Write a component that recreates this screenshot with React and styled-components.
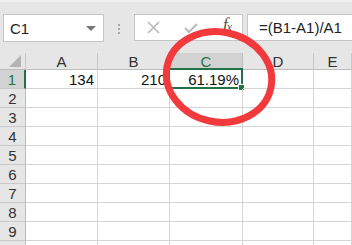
import React from "react";
import styled, { createGlobalStyle } from "styled-components";

const Global = createGlobalStyle`
  html, body { margin: 0; padding: 0; background: #fff; }
  body { width: 352px; height: 245px; overflow: hidden; font-family: "Liberation Sans", Arial, sans-serif; }
`;

const Page = styled.div`
  position: relative;
  width: 352px;
  height: 245px;
  overflow: hidden;
  background: #fff;
`;

const Toolbar = styled.div`
  height: 53px;
  box-sizing: border-box;
  padding-top: 14px;
  padding-left: 3px;
  background: #e6e6e6;
  border-top: 2px solid #f0f0f0;
  display: flex;
  align-items: flex-start;
`;

const Box = styled.div`
  box-sizing: border-box;
  height: ${(p) => p.$h || 28}px;
  background: #fff;
  border: 1px solid #c6c6c6;
  display: flex;
  align-items: center;
`;

const NameBox = styled(Box)`
  width: 101px;
  padding: 0 6px 0 6px;
  justify-content: space-between;
  font-size: 15px;
  color: #222;
  margin-top: -2px;
`;

const Caret = styled.span`
  width: 0;
  height: 0;
  border-left: 5px solid transparent;
  border-right: 5px solid transparent;
  border-top: 5px solid #777;
  margin-right: 1px;
`;

const Dots = styled.div`
  width: 30px;
  height: 26px;
  display: flex;
  flex-direction: column;
  align-items: center;
  justify-content: center;
  gap: 2px;
  & > span {
    width: 2px;
    height: 2px;
    background: #a8a8a8;
  }
`;

const ButtonBox = styled(Box)`
  width: 109px;
  margin-top: -2px;
  padding: 0 11px 0 12px;
  justify-content: space-between;
`;

const Fx = styled.span`
  font-family: "Liberation Serif", serif;
  font-style: italic;
  font-size: 18px;
  line-height: 1;
  color: #555;
  letter-spacing: -1px;
  margin-top: -5px;
  & > small { font-size: 12px; }
`;

const FormulaBox = styled(Box)`
  flex: 1;
  margin-left: 4px;
  margin-top: -2px;
  padding-left: 11px;
  border-right: none;
  font-size: 15px;
  color: #222;
`;

const Grid = styled.div`
  display: grid;
  grid-template-columns: 26px 72px 72px 73px 71px 1fr;
  grid-template-rows: 17px;
  grid-auto-rows: 19px;
`;

const Cell = styled.div`
  position: relative;
  box-sizing: border-box;
  border-right: 1px solid #d4d4d4;
  border-bottom: 1px solid #d4d4d4;
  font-size: 15px;
  color: #111;
  display: flex;
  align-items: center;
  justify-content: flex-end;
  padding-right: 3px;
  padding-top: 1px;
`;

const ColHead = styled.div`
  box-sizing: border-box;
  background: ${(p) => (p.$sel ? "#d2d2d2" : "#e6e6e6")};
  color: ${(p) => (p.$sel ? "#217346" : "#333")};
  border-right: 1px solid ${(p) => (p.$sel ? "#bdbdbd" : "#c9c9c9")};
  border-bottom: 1px solid #bdbdbd;
  font-size: 15px;
  display: flex;
  align-items: center;
  justify-content: center;
  padding-top: 1px;
`;

const Corner = styled(ColHead)`
  position: relative;
  &::after {
    content: "";
    position: absolute;
    right: 4px;
    bottom: 2px;
    width: 0;
    height: 0;
    border-left: 12px solid transparent;
    border-bottom: 12px solid #b4b4b4;
  }
`;

const RowHead = styled.div`
  box-sizing: border-box;
  background: ${(p) => (p.$sel ? "#d2d2d2" : "#e6e6e6")};
  color: ${(p) => (p.$sel ? "#217346" : "#333")};
  border-right: ${(p) => (p.$sel ? "2px solid #217346" : "1px solid #bdbdbd")};
  border-bottom: 1px solid #c9c9c9;
  font-size: 15px;
  display: flex;
  align-items: center;
  justify-content: center;
  padding-top: 1px;
`;

const Selection = styled.div`
  position: absolute;
  left: -2px;
  top: -2px;
  right: -1px;
  bottom: -1px;
  border: 2px solid #217346;
  pointer-events: none;
  &::after {
    content: "";
    position: absolute;
    right: -4px;
    bottom: -4px;
    width: 5px;
    height: 5px;
    background: #217346;
    border: 1px solid #fff;
  }
`;

const Annotation = styled.svg`
  position: absolute;
  left: 0;
  top: 0;
  pointer-events: none;
`;

const cols = ["A", "B", "C", "D", "E"];
const rows = [1, 2, 3, 4, 5, 6, 7, 8, 9, 10];
const data = { "1A": "134", "1B": "210", "1C": "61.19%" };

export default function App() {
  return (
    <Page>
      <Global />
      <Toolbar>
        <NameBox>
          <span>C1</span>
          <Caret />
        </NameBox>
        <Dots>
          <span />
          <span />
          <span />
        </Dots>
        <ButtonBox $h={27}>
          <svg width="13" height="13" viewBox="0 0 13 13">
            <path d="M1 1 L12 12 M12 1 L1 12" stroke="#b9b9b9" strokeWidth="1.6" fill="none" />
          </svg>
          <svg width="14" height="12" viewBox="0 0 14 12">
            <path d="M1 6 L5 10 L13 2" stroke="#b9b9b9" strokeWidth="2" fill="none" />
          </svg>
          <Fx>
            f<small>x</small>
          </Fx>
        </ButtonBox>
        <FormulaBox $h={27}>=(B1-A1)/A1</FormulaBox>
      </Toolbar>
      <Grid>
        <Corner />
        {cols.map((c) => (
          <ColHead key={c} $sel={c === "C"}>
            {c}
          </ColHead>
        ))}
        {rows.map((r) => (
          <React.Fragment key={r}>
            <RowHead $sel={r === 1}>{r < 10 ? r : ""}</RowHead>
            {cols.map((c) => (
              <Cell key={c}>
                {data[`${r}${c}`]}
                {r === 1 && c === "C" && <Selection />}
              </Cell>
            ))}
          </React.Fragment>
        ))}
      </Grid>
      <Annotation width="352" height="245">
        <ellipse
          cx="219"
          cy="77"
          rx="53"
          ry="45"
          transform="rotate(12 219 77)"
          fill="none"
          stroke="#f23a3c"
          strokeWidth="7"
        />
      </Annotation>
    </Page>
  );
}
